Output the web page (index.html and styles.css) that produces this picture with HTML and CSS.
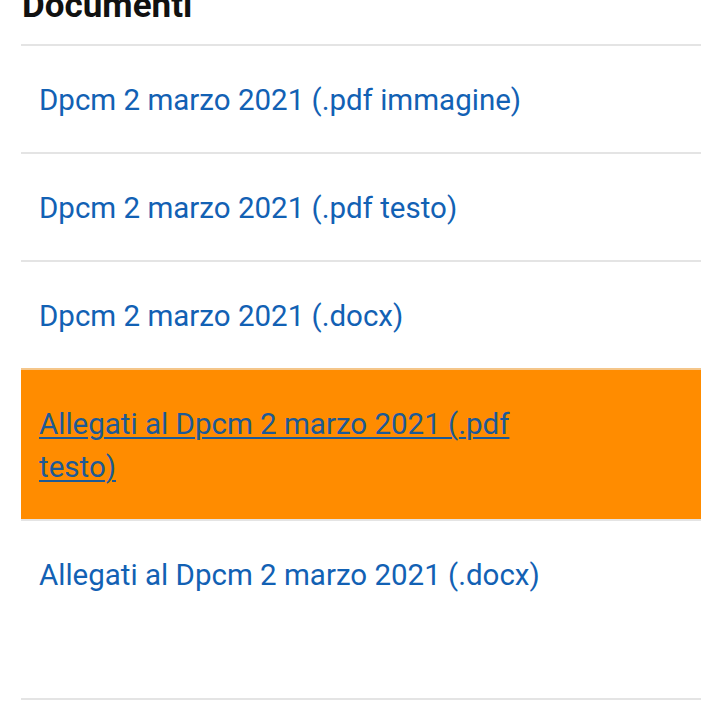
FILE: index.html
```html
<!DOCTYPE html>
<html lang="it">
<head>
<meta charset="utf-8">
<link rel="stylesheet" href="styles.css">
</head>
<body>
<section class="docs">
  <h2 class="docs-title">Documenti</h2>
  <ul class="doc-list">
    <li class="doc-item"><a class="doc-link" href="#">Dpcm 2 marzo 2021 (.pdf immagine)</a></li>
    <li class="doc-item"><a class="doc-link" href="#">Dpcm 2 marzo 2021 (.pdf testo)</a></li>
    <li class="doc-item"><a class="doc-link" href="#">Dpcm 2 marzo 2021 (.docx)</a></li>
    <li class="doc-item doc-item--active"><a class="doc-link" href="#">Allegati al Dpcm 2 marzo 2021 (.pdf testo)</a></li>
    <li class="doc-item doc-item--last"><a class="doc-link" href="#">Allegati al Dpcm 2 marzo 2021 (.docx)</a></li>
  </ul>
</section>
</body>
</html>
```
FILE: styles.css
```css
html, body {
  margin: 0;
  padding: 0;
  background: #fff;
}
body {
  font-family: Roboto, "Open Sans", sans-serif;
}
.docs {
  margin: -27px 19px 0 21px;
}
.docs-title {
  margin: 0;
  padding: 11px 0 0 1px;
  font-size: 35px;
  line-height: 43px;
  font-weight: 700;
  color: #111;
  height: 71px;
  box-sizing: border-box;
}
.doc-list {
  list-style: none;
  margin: 0;
  padding: 0;
  border-bottom: 2px solid #e4e4e4;
}
.doc-item {
  border-top: 2px solid #e4e4e4;
  padding: 33px 18px 30px;
  font-size: 29.5px;
  line-height: 43px;
}
.doc-link {
  color: #1261b4;
  text-decoration: none;
  display: inline-block;
  max-width: 545px;
}
.doc-item--active {
  background: #ff8c00;
  border-top-color: #f5c68a;
}
.doc-item--active .doc-link {
  color: #1d5a96;
  text-decoration: underline;
  text-decoration-thickness: 2px;
  text-underline-offset: 3px;
}
.doc-item--last {
  padding-bottom: 101px;
}
```
